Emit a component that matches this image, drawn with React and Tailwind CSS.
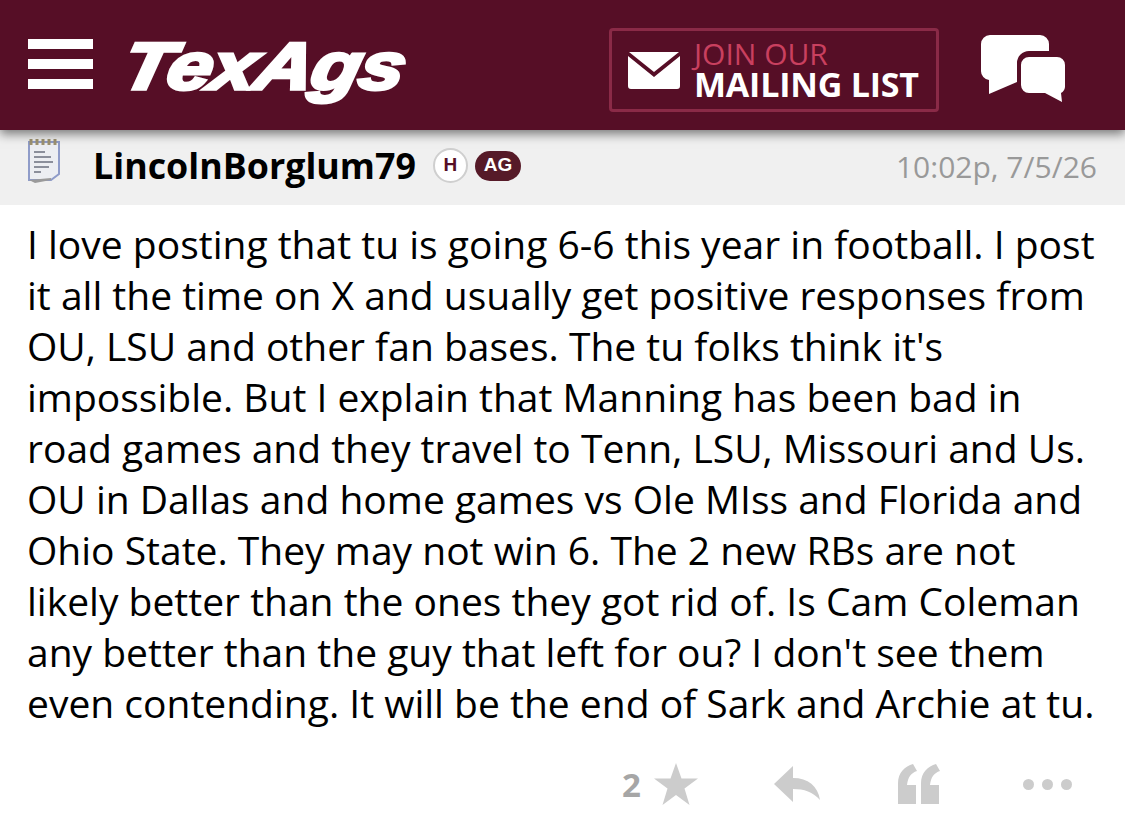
export default function App() {
  return (
    <div className="w-[1125px] h-[839px] overflow-hidden bg-white flex flex-col font-['Open_Sans',sans-serif]">
      <header className="relative z-10 h-[130px] shrink-0 bg-[#560e26] shadow-[0_4px_10px_rgba(0,0,0,0.5)] flex items-center pl-[28px]">
        <div className="w-[65px] flex flex-col gap-[10px] mt-[-2px]">
          <div className="h-[10px] bg-white" />
          <div className="h-[10px] bg-white" />
          <div className="h-[10px] bg-white" />
        </div>
        <div className="ml-[31px] w-[285px] mt-[2px] text-white font-['Liberation_Sans',sans-serif] font-bold italic text-[66px] leading-none tracking-[-1px] [-webkit-text-stroke:3.5px_white] origin-left [transform:scaleX(1.22)_skewX(-10deg)]">
          TexAgs
        </div>
        <div className="ml-[200px] mt-[10px] w-[330px] h-[84px] shrink-0 rounded-[4px] border-[3px] border-[#8a2a47] flex items-center pl-[16px]">
          <svg width="52" height="37" viewBox="0 0 52 37" className="shrink-0">
            <path d="M1 0H51L26 20Z" fill="#fff" />
            <path d="M0 4L26 25L52 4V34a3 3 0 0 1-3 3H3a3 3 0 0 1-3-3Z" fill="#fff" />
          </svg>
          <div className="ml-[14px] flex flex-col">
            <span className="text-[#c9405f] text-[30px] leading-[29px] font-medium">JOIN OUR</span>
            <span className="text-white text-[34px] leading-[33px] font-bold tracking-[-0.2px]">MAILING LIST</span>
          </div>
        </div>
        <svg width="85" height="68" viewBox="0 0 85 68" className="ml-[42px] mt-[8px] shrink-0">
          <path d="M9 0H59a9 9 0 0 1 9 9V16H48a12 12 0 0 0-12 12V47L8 59L8 45a9 9 0 0 1-8-9V9a9 9 0 0 1 9-9Z" fill="#fff" />
          <path d="M48 22H76a8 8 0 0 1 8 8V52a8 8 0 0 1-4 6L81 67L64 58H48a8 8 0 0 1-8-8V30a8 8 0 0 1 8-8Z" fill="#fff" />
        </svg>
      </header>

      <div className="h-[75px] shrink-0 bg-[#f0f0f0] flex items-center pl-[27px] pr-[28px]">
        <svg width="34" height="46" viewBox="0 0 34 46" className="shrink-0 mt-[-14px]">
          <path d="M2 4H32V36L24 42H2Z" fill="#eceef2" stroke="#8f9cc9" strokeWidth="2" />
          <path d="M2 42L24 40V42L8 45Z" fill="#9a9a9a" />
          <path d="M4 1V7M10 1V7M16 1V7M22 1V7M28 1V7" stroke="#9d9270" strokeWidth="3" />
          <path d="M7 14H18M7 19H24M7 24H26M7 29H22M7 34H14" stroke="#8b8f9b" strokeWidth="2" />
        </svg>
        <span className="ml-[32px] mt-[-4px] text-black font-bold text-[35.8px] leading-none">LincolnBorglum79</span>
        <span className="ml-[17px] mt-[-4px] w-[35px] h-[35px] rounded-full bg-white border-2 border-[#cfcfcf] flex items-center justify-center text-[#560e26] font-['Liberation_Sans',sans-serif] font-bold text-[19px]">H</span>
        <span className="ml-[7px] mt-[-4px] w-[46px] h-[30px] rounded-full bg-[#561a28] flex items-center justify-center text-white font-['Liberation_Sans',sans-serif] font-bold text-[19px]">AG</span>
        <span className="ml-auto mt-[-2px] text-[#999999] text-[30px] leading-none">10:02p, 7/5/26</span>
      </div>

      <p className="pl-[27px] pt-[13px] text-black text-[39px] leading-[51px] whitespace-nowrap">
        I love posting that tu is going 6-6 this year in football. I post<br />
        it all the time on X and usually get positive responses from<br />
        OU, LSU and other fan bases. The tu folks think it's<br />
        impossible. But I explain that Manning has been bad in<br />
        road games and they travel to Tenn, LSU, Missouri and Us.<br />
        OU in Dallas and home games vs Ole MIss and Florida and<br />
        Ohio State. They may not win 6. The 2 new RBs are not<br />
        likely better than the ones they got rid of. Is Cam Coleman<br />
        any better than the guy that left for ou? I don't see them<br />
        even contending. It will be the end of Sark and Archie at tu.
      </p>

      <div className="mt-[35px] flex items-center pl-[622px]">
        <span className="text-[#a6a6a6] font-bold text-[33px] leading-none">2</span>
        <svg width="44" height="42" viewBox="0 0 44 42" className="ml-[13px]">
          <path d="M22 0L27.5 15.5H44L30.5 25.5L35.5 42L22 32L8.5 42L13.5 25.5L0 15.5H16.5Z" fill="#cccccc" />
        </svg>
        <svg width="46" height="36" viewBox="0 0 46 36" className="ml-[76px]">
          <path d="M19 0V12C34 12 44 20 46 34C39 26 30 23 19 23V36L0 18Z" fill="#cccccc" />
        </svg>
        <svg width="42" height="40" viewBox="0 0 42 40" className="ml-[78px]">
          <path d="M0 40V19C0 9 7 2 15 0L19 7C13 9 10 13 9 21H18V40Z" fill="#cccccc" />
          <path d="M23 40V19C23 9 30 2 38 0L42 7C36 9 33 13 32 21H41V40Z" fill="#cccccc" />
        </svg>
        <div className="ml-[83px] flex gap-[8px]">
          <div className="w-[11px] h-[11px] rounded-full bg-[#cccccc]" />
          <div className="w-[11px] h-[11px] rounded-full bg-[#cccccc]" />
          <div className="w-[11px] h-[11px] rounded-full bg-[#cccccc]" />
        </div>
      </div>
    </div>
  );
}
